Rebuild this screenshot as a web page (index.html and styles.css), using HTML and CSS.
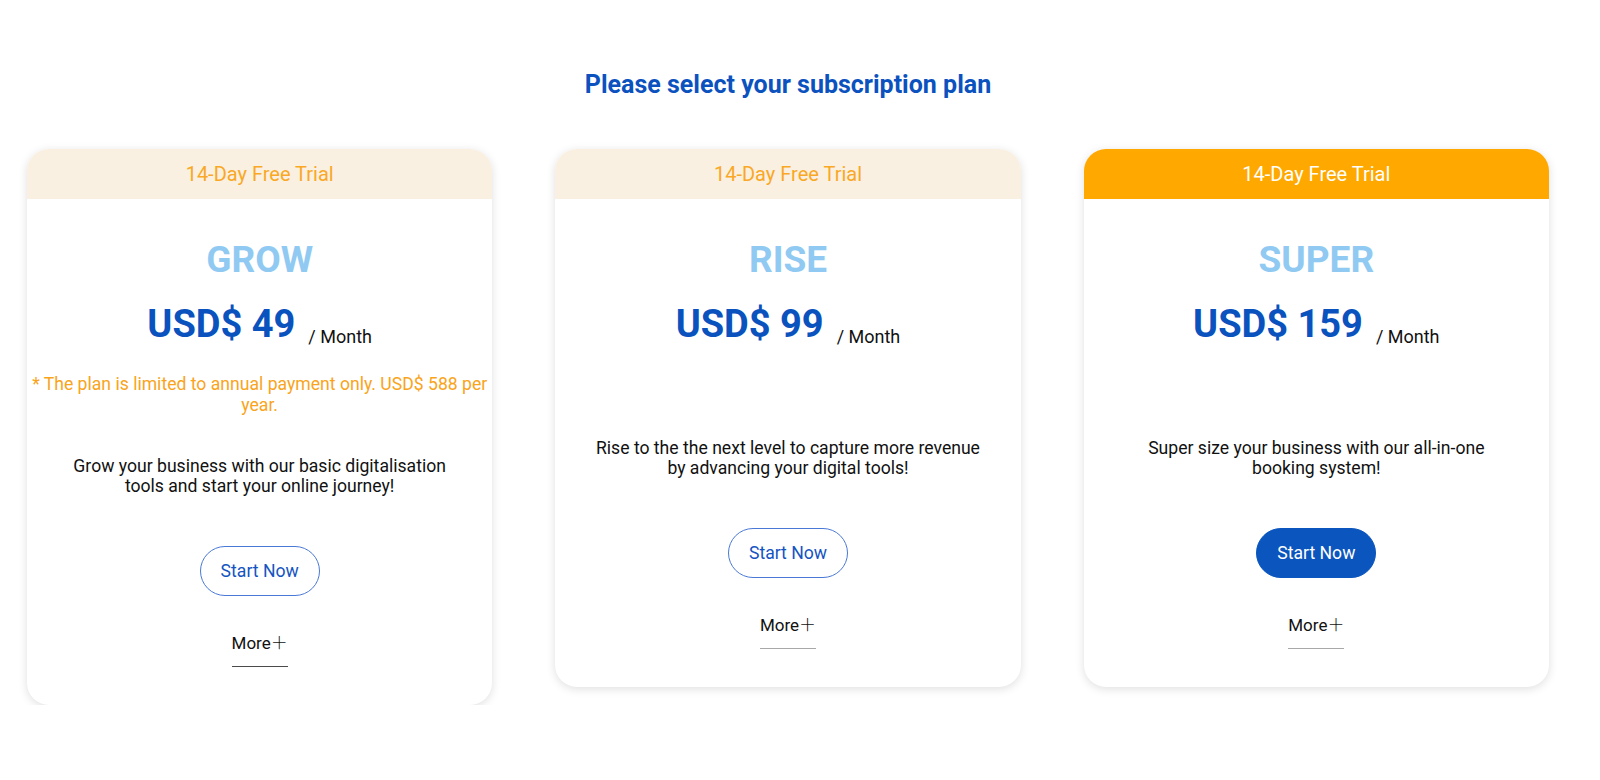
FILE: index.html
```html
<!DOCTYPE html>
<html lang="en">
<head>
<meta charset="utf-8">
<title>Subscription plans</title>
<link rel="stylesheet" href="styles.css">
</head>
<body>
<main class="page">
  <h1 class="title">Please select your subscription plan</h1>
  <section class="plans">
    <article class="plan">
      <div class="plan-head">14-Day Free Trial</div>
      <div class="plan-body">
        <h2 class="plan-name">GROW</h2>
        <div class="price"><span class="amount">USD$ 49</span><span class="period">/ Month</span></div>
        <p class="note">* The plan is limited to annual payment only. USD$ 588 per year.</p>
        <p class="desc">Grow your business with our basic digitalisation tools and start your online journey!</p>
        <button class="btn">Start Now</button>
        <div class="more-wrap"><span class="more more-dark">More<span class="plus">＋</span></span></div>
      </div>
    </article>
    <article class="plan">
      <div class="plan-head">14-Day Free Trial</div>
      <div class="plan-body">
        <h2 class="plan-name">RISE</h2>
        <div class="price"><span class="amount">USD$ 99</span><span class="period">/ Month</span></div>
        <p class="note"></p>
        <p class="desc">Rise to the the next level to capture more revenue by advancing your digital tools!</p>
        <button class="btn">Start Now</button>
        <div class="more-wrap"><span class="more">More<span class="plus">＋</span></span></div>
      </div>
    </article>
    <article class="plan plan-featured">
      <div class="plan-head">14-Day Free Trial</div>
      <div class="plan-body">
        <h2 class="plan-name">SUPER</h2>
        <div class="price"><span class="amount">USD$ 159</span><span class="period">/ Month</span></div>
        <p class="note"></p>
        <p class="desc">Super size your business with our all-in-one booking system!</p>
        <button class="btn btn-solid">Start Now</button>
        <div class="more-wrap"><span class="more">More<span class="plus">＋</span></span></div>
      </div>
    </article>
  </section>
</main>
</body>
</html>
```

FILE: styles.css
```css
* { box-sizing: border-box; }

html, body {
  margin: 0;
  padding: 0;
  background: #ffffff;
}

body {
  font-family: Roboto, "Liberation Sans", Arial, sans-serif;
  color: #111111;
}

.page {
  padding-top: 72px;
  margin-left: 27px;
  width: 1522px;
}

.title {
  margin: 0 0 51px;
  text-align: center;
  font-size: 25px;
  line-height: 26px;
  font-weight: 700;
  color: #0b52bf;
}

.plans {
  display: grid;
  grid-template-columns: repeat(3, 1fr);
  column-gap: 63px;
  align-items: start;
}

.plan {
  background: #ffffff;
  border-radius: 22px;
  box-shadow: 0 2px 10px rgba(0, 0, 0, 0.13);
  overflow: hidden;
}

.plan-head {
  height: 50px;
  line-height: 50px;
  text-align: center;
  font-size: 20px;
  background: #faf0e2;
  color: #f9a825;
}

.plan-featured .plan-head {
  background: #ffa800;
  color: #ffffff;
}

.plan-body {
  display: flex;
  flex-direction: column;
  align-items: center;
  padding: 39px 5px 38px;
  text-align: center;
}

.plan-name {
  margin: 0;
  font-size: 37px;
  line-height: 43px;
  font-weight: 700;
  color: #90caf2;
}

.price {
  margin-top: 22px;
  line-height: 43px;
  white-space: nowrap;
}

.amount {
  font-size: 38px;
  font-weight: 700;
  color: #0a52be;
}

.period {
  margin-left: 13px;
  font-size: 18px;
  line-height: 20px;
  vertical-align: -6px;
  color: #111111;
}

.note {
  margin: 21px 0 0;
  min-height: 24px;
  font-size: 17.6px;
  line-height: 21px;
  color: #f9a41b;
}

.desc {
  margin: 40px 0 0;
  max-width: 392px;
  font-size: 17.6px;
  line-height: 20px;
  color: #111111;
}

.btn {
  margin-top: 50px;
  height: 50px;
  padding: 0 20px;
  border: 1px solid #4a78d6;
  border-radius: 25px;
  background: #ffffff;
  color: #1454c2;
  font-family: inherit;
  font-size: 17.6px;
  line-height: 48px;
  cursor: pointer;
}

.btn-solid {
  background: #0a55be;
  border-color: #0a55be;
  color: #ffffff;
}

.more-wrap {
  margin-top: 36px;
}

.more {
  display: inline-block;
  padding-bottom: 13px;
  border-bottom: 1px solid #a8a8a8;
  font-size: 17px;
  line-height: 20px;
  color: #111111;
}

.more-dark {
  border-bottom-color: #4a4a4a;
}

.plus {
  font-family: "Noto Sans CJK SC", "Noto Sans", sans-serif;
  font-weight: 300;
}
```
